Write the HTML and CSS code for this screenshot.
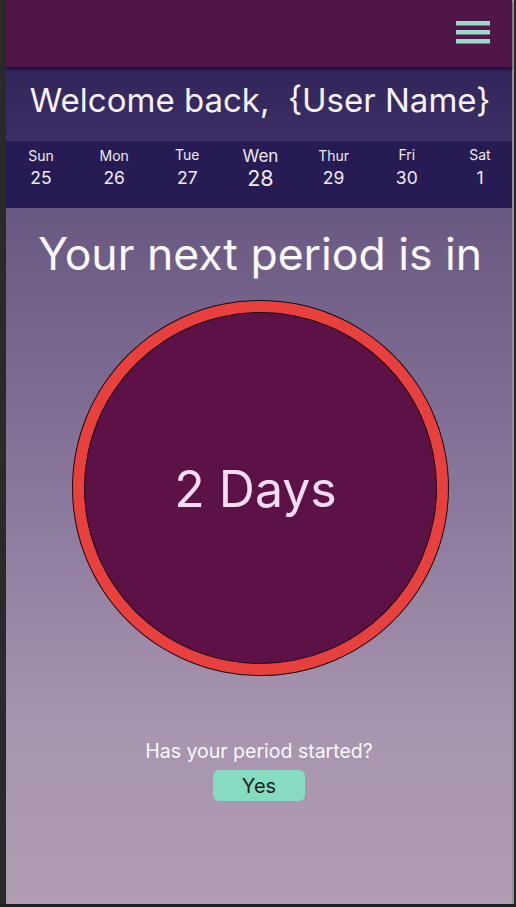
FILE: index.html
```html
<!DOCTYPE html>
<html lang="en">
<head>
<meta charset="utf-8">
<link rel="stylesheet" href="styles.css">
</head>
<body>
<div class="frame">
  <div class="app">
    <header class="topbar">
      <button class="menu" aria-label="Menu">
        <svg width="34" height="26" viewBox="0 0 34 26"><rect x="0" y="2" width="34" height="4.5" fill="#9ad9c9"/><rect x="0" y="11" width="34" height="4.5" fill="#9ad9c9"/><rect x="0" y="20" width="34" height="4.5" fill="#9ad9c9"/></svg>
      </button>
    </header>
    <section class="welcome">Welcome back,&nbsp; {User Name}</section>
    <nav class="week">
      <div class="day"><span class="dname">Sun</span><span class="dnum">25</span></div>
      <div class="day"><span class="dname">Mon</span><span class="dnum">26</span></div>
      <div class="day up"><span class="dname">Tue</span><span class="dnum">27</span></div>
      <div class="day today"><span class="dname">Wen</span><span class="dnum">28</span></div>
      <div class="day"><span class="dname">Thur</span><span class="dnum">29</span></div>
      <div class="day up"><span class="dname">Fri</span><span class="dnum">30</span></div>
      <div class="day up"><span class="dname">Sat</span><span class="dnum">1</span></div>
    </nav>
    <main class="main">
      <h1 class="title">Your next period is in</h1>
      <div class="ring"><div class="disc">2 Days</div></div>
      <p class="question">Has your period started?</p>
      <button class="yes">Yes</button>
    </main>
  </div>
</div>
</body>
</html>
```
FILE: styles.css
```css
* { box-sizing: border-box; }
html, body { margin: 0; padding: 0; }
body {
  width: 516px;
  height: 907px;
  background: #1e2120;
  font-family: Inter, "Noto Sans", sans-serif;
  overflow: hidden;
}
.frame {
  height: 904px;
  padding-left: 6px;
  padding-right: 2px;
  background: #282b2a;
}
.app {
  height: 904px;
  width: 508px;
  display: flex;
  flex-direction: column;
  background: linear-gradient(180deg, #574775 0%, #66557f 20%, #8a789c 55%, #a794ae 80%, #b09db3 100%);
  border-right: 2px solid #9a8ea0;
}
.topbar {
  height: 67px;
  background: #4f1647;
  display: flex;
  justify-content: flex-end;
  align-items: flex-start;
  padding: 19px 22px 0 0;
  box-shadow: 0 3px 2px rgba(20, 10, 40, 0.6);
  position: relative;
  z-index: 2;
}
.menu {
  border: 0;
  background: none;
  padding: 0;
  display: block;
}
.menu svg { display: block; }
.welcome {
  height: 74px;
  background: linear-gradient(180deg, #31255a 0%, #3d2f66 100%);
  color: #f6f2fa;
  font-size: 33px;
  line-height: 40px;
  text-align: center;
  padding-top: 13px;
  padding-left: 2px;
}
.week {
  height: 67px;
  background: #261c53;
  display: flex;
  justify-content: space-between;
  padding: 6px 4px 0 7px;
}
.day {
  display: flex;
  flex-direction: column;
  align-items: center;
  color: #eeeaf4;
  width: 56px;
}
.dname { font-size: 14px; line-height: 17px; }
.dnum { font-size: 17.5px; line-height: 27px; }
.day.up .dname { margin-top: -1px; margin-bottom: 1px; }
.day.today .dname { font-size: 17px; line-height: 20px; margin-top: -1px; }
.day.today .dnum { font-size: 21.5px; line-height: 24px; }
.main {
  flex: 1;
  display: flex;
  flex-direction: column;
  align-items: center;
}
.title {
  margin: 20px 0 0 0;
  font-weight: 400;
  font-size: 44.5px;
  line-height: 52px;
  color: #fbf8fc;
  padding-left: 2px;
}
.ring {
  margin-top: 20px;
  margin-left: 3px;
  width: 377px;
  height: 376px;
  border-radius: 50%;
  background: #e8403c;
  border: 1.5px solid #1a0a14;
  padding: 11px;
  display: flex;
}
.disc {
  flex: 1;
  border-radius: 50%;
  background: #5c1246;
  border: 1.5px solid #1a0a14;
  display: flex;
  align-items: center;
  justify-content: center;
  color: #f4dcf4;
  font-size: 50px;
  padding-top: 2px;
  padding-right: 10px;
}
.question {
  margin: 63px 0 0 0;
  font-size: 19.5px;
  line-height: 24px;
  color: #fbf8fc;
}
.yes {
  margin-top: 7px;
  width: 92px;
  height: 31px;
  border: 0;
  border-radius: 6px;
  background: #86dcc0;
  color: #222;
  font-family: Inter, "Noto Sans", sans-serif;
  font-size: 20px;
  padding: 0;
}
```
